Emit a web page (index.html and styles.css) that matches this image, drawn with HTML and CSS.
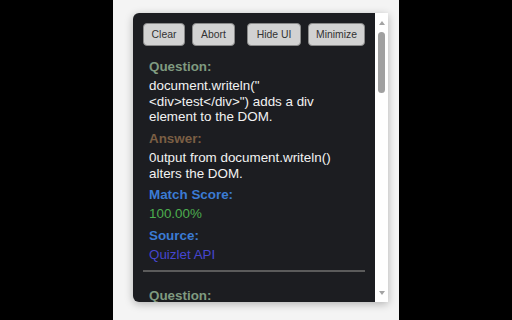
FILE: index.html
```html
<!DOCTYPE html>
<html>
<head>
<meta charset="utf-8">
<link rel="stylesheet" href="styles.css">
</head>
<body>
<div class="page">
  <div class="panel">
    <div class="content">
      <div class="toolbar">
        <button class="btn btn-clear">Clear</button>
        <button class="btn btn-abort">Abort</button>
        <button class="btn btn-hide">Hide UI</button>
        <button class="btn btn-min">Minimize</button>
      </div>
      <div class="item">
        <div class="label label-q">Question:</div>
        <div class="value">document.writeln("<br>&lt;div&gt;test&lt;/div&gt;") adds a div element to the DOM.</div>
        <div class="label label-a">Answer:</div>
        <div class="value">0utput from document.writeln() alters the DOM.</div>
        <div class="label label-blue">Match Score:</div>
        <div class="value value-green">100.00%</div>
        <div class="label label-blue">Source:</div>
        <div class="value value-link">Quizlet API</div>
      </div>
      <div class="divider"></div>
      <div class="item">
        <div class="label label-q">Question:</div>
      </div>
    </div>
    <div class="scrollbar">
      <div class="arrow-up"></div>
      <div class="thumb"></div>
      <div class="spacer"></div>
      <div class="arrow-down"></div>
    </div>
  </div>
</div>
</body>
</html>
```
FILE: styles.css
```css
html, body {
  margin: 0;
  padding: 0;
  background: #000;
}
body {
  width: 512px;
  height: 320px;
  overflow: hidden;
  font-family: "Liberation Sans", Arial, sans-serif;
}
.page {
  margin-left: 113px;
  width: 286px;
  height: 320px;
  background: #f4f4f4;
  padding: 13px 0 0 20px;
  box-sizing: border-box;
}
.panel {
  display: flex;
  width: 255px;
  height: 288.5px;
  box-shadow: 0 2px 8px rgba(0,0,0,0.28);
  border-radius: 6px 0 0 6px;
}
.content {
  flex: 1;
  background: #1c1d21;
  border-radius: 6px 0 0 6px;
  padding: 10px 10px 0 10px;
  overflow: hidden;
}
.toolbar {
  display: flex;
  height: 23px;
}
.btn {
  height: 23px;
  padding: 0;
  margin: 0 7px 0 0;
  background: #d2d2d2;
  border: 1px solid #8a8a8a;
  border-radius: 4px;
  font-family: "Liberation Sans", Arial, sans-serif;
  font-size: 10.4px;
  color: #333;
  box-sizing: border-box;
}
.btn-clear { width: 42px; }
.btn-abort { width: 43px; margin-right: 12px; }
.btn-hide { width: 54px; }
.btn-min { width: 57px; margin-right: 0; }
.item {
  padding: 13.25px 6px 0 6px;
  font-size: 13.4px;
  line-height: 15.5px;
}
.label {
  font-weight: bold;
  margin-bottom: 3.5px;
}
.label-q { color: #7f9a80; }
.label-a { color: #7b5f44; }
.label-blue { color: #3b7bd4; }
.value {
  color: #f2f2f2;
  margin-bottom: 6.3px;
}
.value-green { color: #4cae4f; }
.value-link { color: #4646cf; margin-bottom: 0; }
.divider {
  height: 2px;
  background: #5b5b5b;
  margin-top: 7px;
}
.divider + .item {
  padding-top: 16px;
}
.scrollbar {
  width: 13px;
  background: #fff;
  display: flex;
  flex-direction: column;
  align-items: center;
  padding: 8px 0 6.5px 0;
  box-sizing: border-box;
}
.arrow-up {
  width: 0;
  height: 0;
  border-left: 3.5px solid transparent;
  border-right: 3.5px solid transparent;
  border-bottom: 4px solid #a3a3a3;
}
.thumb {
  width: 7px;
  height: 61px;
  margin-top: 7px;
  border-radius: 3.5px;
  background: #a0a0a0;
}
.spacer { flex: 1; }
.arrow-down {
  width: 0;
  height: 0;
  border-left: 3.5px solid transparent;
  border-right: 3.5px solid transparent;
  border-top: 4px solid #a3a3a3;
}
```
